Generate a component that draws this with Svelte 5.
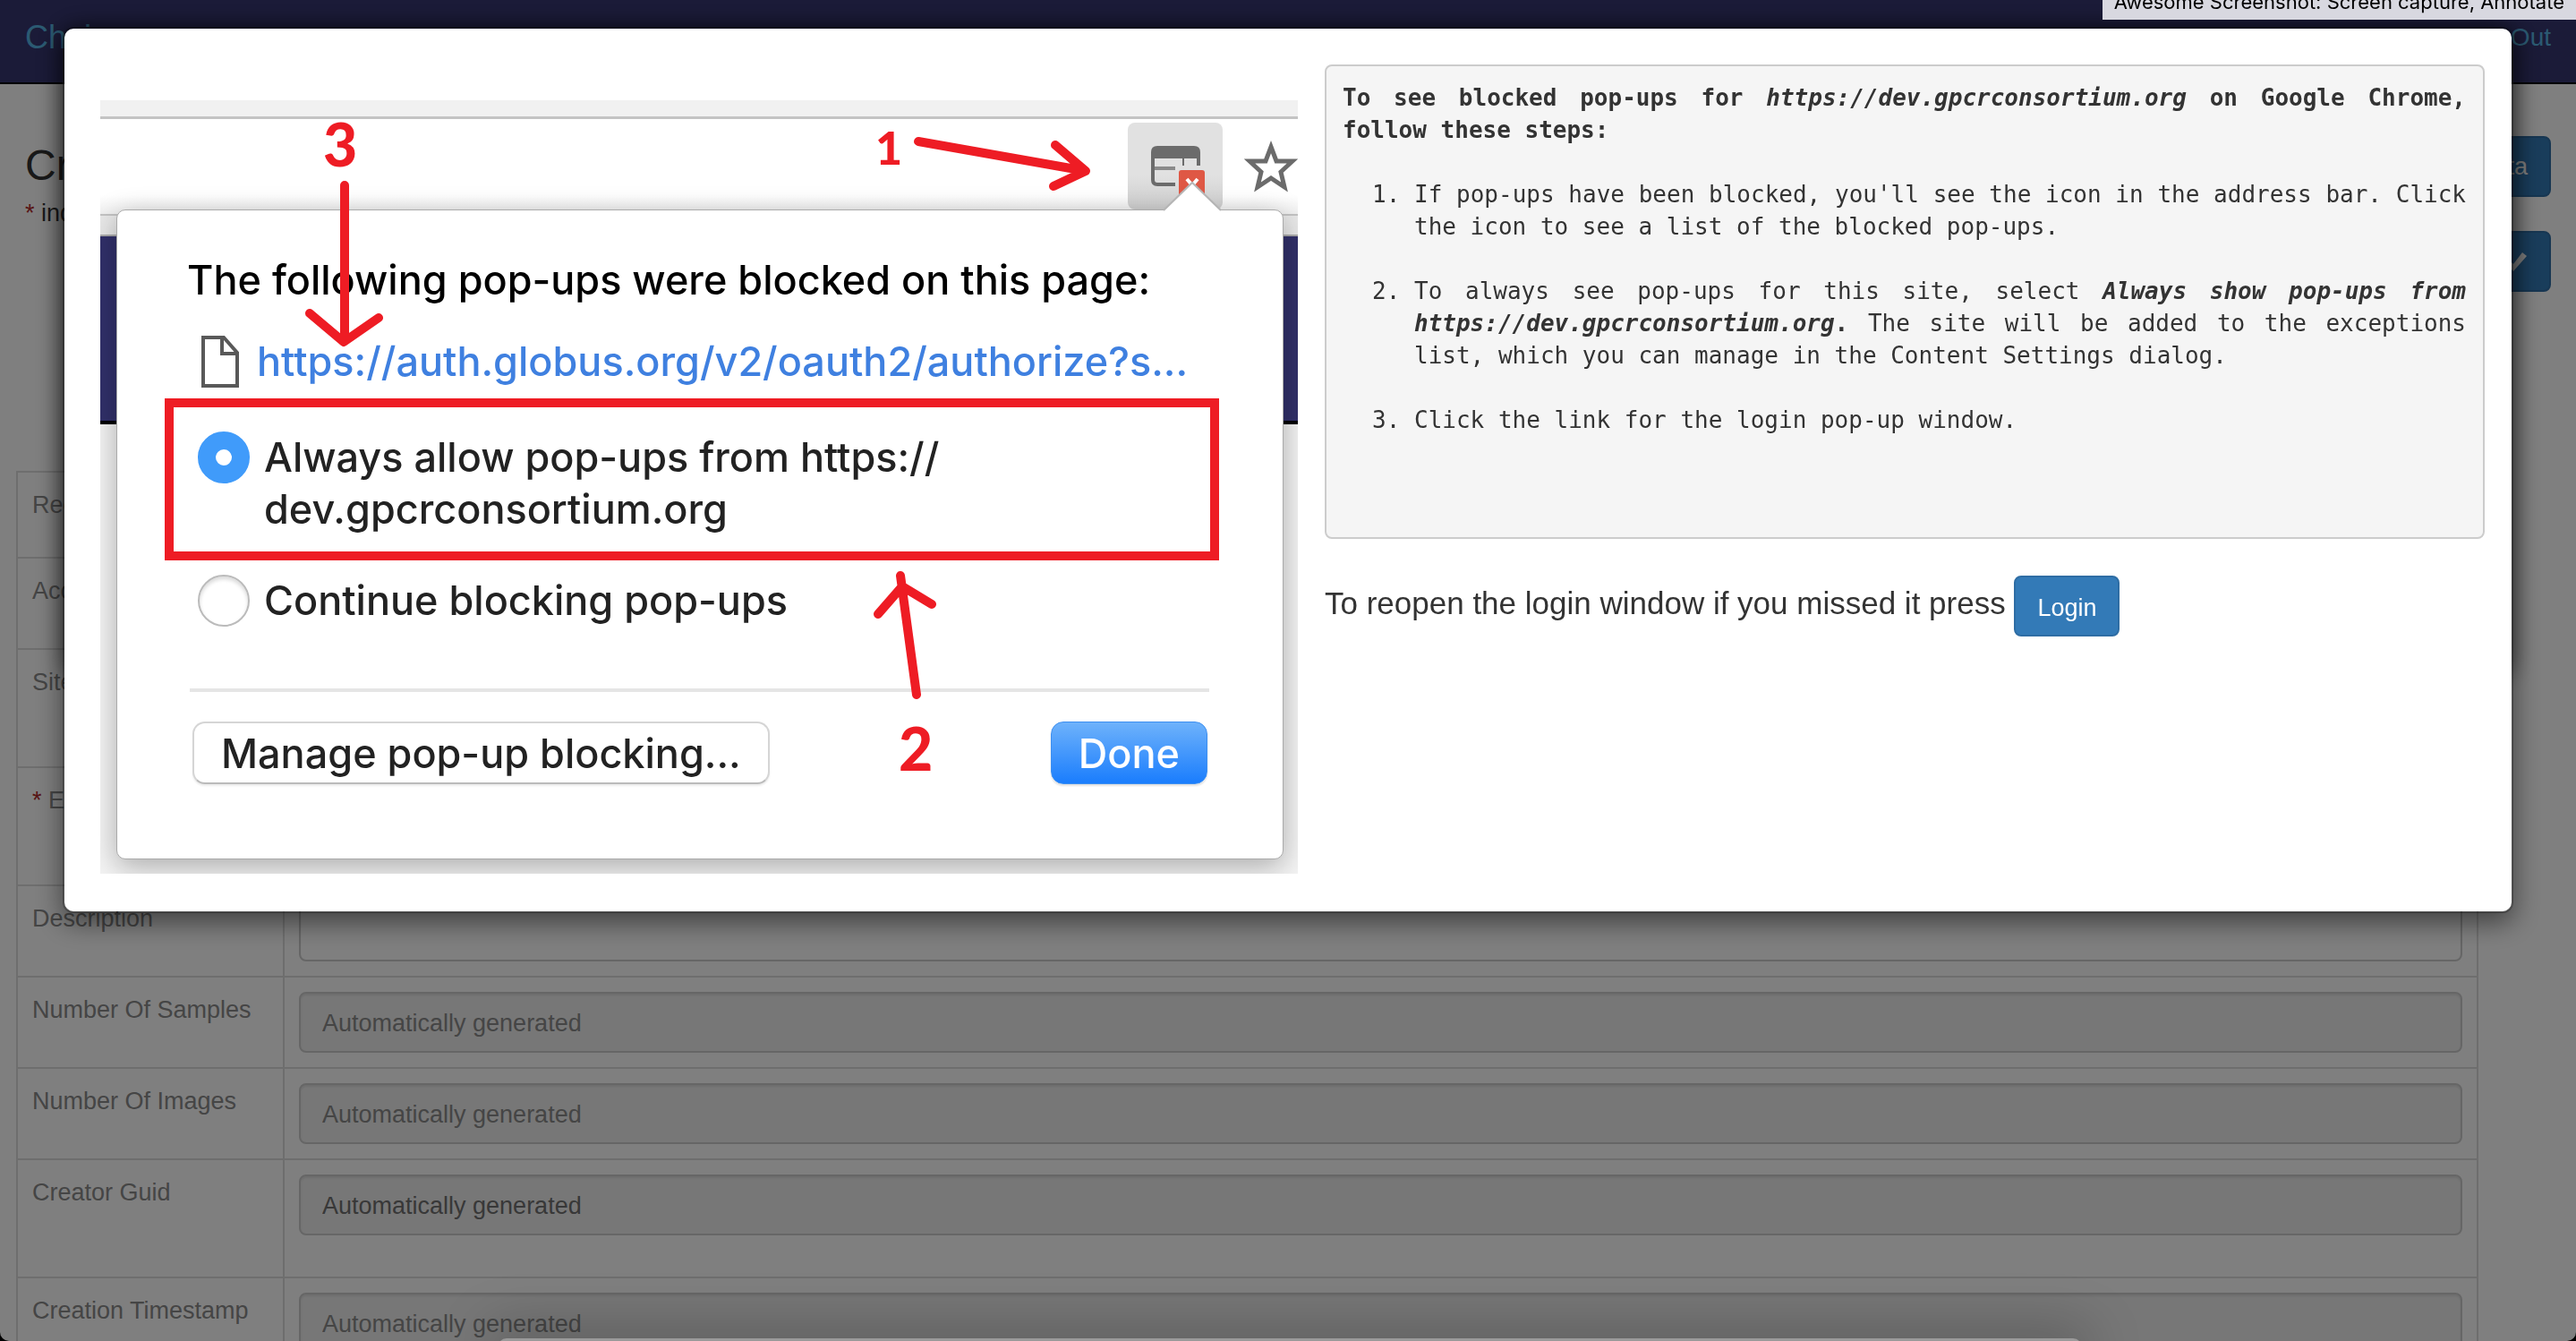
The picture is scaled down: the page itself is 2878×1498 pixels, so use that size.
<script>
  const rows = [
    { label: 'Record', size: 'short' },
    { label: 'Accession', size: 'plain' },
    { label: 'Site', size: 'tall' },
    { label: 'Experiment', size: 'tall', required: true },
    { label: 'Description', size: 'plain', editable: true },
    { label: 'Number Of Samples', size: 'plain', auto: true },
    { label: 'Number Of Images', size: 'plain', auto: true },
    { label: 'Creator Guid', size: 'tall', auto: true, strong: true },
    { label: 'Creation Timestamp', size: 'tall', auto: true }
  ];
  let choice = $state('allow');
</script>

<div class="page">
  <nav class="navbar">
    <a class="brand" href="#home">Chaise</a>
    <a class="logout" href="#logout">Log Out</a>
  </nav>

  <header class="record-head">
    <div>
      <h1>Create Record</h1>
      <p class="hint"><span class="req">*</span> indicates required field</p>
    </div>
    <div class="actions">
      <button class="primary" type="button">Submit Data</button>
      <button class="primary" type="button" aria-label="Apply">
        <svg class="check" viewBox="0 0 28 28"><path d="M1 14 L5 10 L12 17 L22 4 L27 8 L12 25 Z" /></svg>
      </button>
    </div>
  </header>

  <table class="form">
    <tbody>
      {#each rows as row, i}
        <tr class={row.size}>
          <th scope="row"><label for="field-{i}">{#if row.required}<span class="req">*</span>{' '}{/if}{row.label}</label></th>
          <td>
            <input
              id="field-{i}"
              class:strong={row.strong}
              type="text"
              disabled={row.auto}
              placeholder={row.auto ? 'Automatically generated' : ''}
            />
          </td>
        </tr>
      {/each}
    </tbody>
  </table>
</div>

<div class="overlay">
  <div class="modal" role="dialog" aria-label="Blocked pop-ups">
    <div class="columns">
      <figure class="shot">
        <div class="browser">
          <div class="tabs"></div>
          <div class="address">
            <div class="blocked">
              <svg viewBox="0 0 106 97">
                <g fill="none" stroke="#6b6b6b" stroke-width="4">
                  <path d="M53 69 H33 Q28 69 28 64 V33 Q28 28 33 28 H74 Q79 28 79 33 V48" />
                  <path d="M30 51 H53" stroke="#8a8a8a" />
                  <path d="M62 36 V48" stroke-width="2" />
                </g>
                <path d="M28 28 H79 V40 H28 Z" fill="#6b6b6b" />
                <rect x="57" y="53" width="29" height="38" rx="3" fill="#df5845" />
                <path d="M66 63 L78 77 M78 63 L66 77" stroke="#fff" stroke-width="4" />
              </svg>
            </div>
            <svg class="star" viewBox="0 0 60 60">
              <path d="M30 9 L36 25 L54 25 L41 37 L45 54 L30 44 L15 54 L19 37 L6 25 L24 25 Z" />
            </svg>
          </div>
          <div class="toolbar"></div>
          <div class="site-nav"></div>
          <div class="site-body"></div>
        </div>

        <div class="popup">
          <svg class="pointer" viewBox="0 0 64 34"><path d="M0 33 L32 2 L64 33" /></svg>
          <p class="title">The following pop-ups were blocked on this page:</p>
          <p class="target">
            <svg viewBox="0 0 42 58"><path d="M2 2 H25 L40 19 V56 H2 Z M23 2 V20 H40" /></svg>
            <a href="#authorize">https://auth.globus.org/v2/oauth2/authorize?s...</a>
          </p>
          <label class="option marked">
            <input type="radio" name="popups" value="allow" bind:group={choice} />
            <span>Always allow pop-ups from https://<br />dev.gpcrconsortium.org</span>
          </label>
          <label class="option">
            <input type="radio" name="popups" value="block" bind:group={choice} />
            <span>Continue blocking pop-ups</span>
          </label>
          <hr />
          <div class="popup-buttons">
            <button class="manage" type="button">Manage pop-up blocking...</button>
            <button class="done" type="button">Done</button>
          </div>
        </div>

        <svg class="marks" viewBox="0 0 1338 864">
          <g class="strokes">
            <path d="M914 46 L1101 79 M1067 50 L1101 79 L1065 96" />
            <path d="M273 95 V266 M234 238 L272 270 L311 243" />
            <path d="M912 664 L894 531 M869 574 L896 543 L929 563" />
          </g>
          <text x="866" y="72" font-size="52">1</text>
          <text x="249" y="74" font-size="66">3</text>
          <text x="892" y="749" font-size="66">2</text>
        </svg>
      </figure>

      <section class="help">
        <div class="steps">
          <p><b>To see blocked pop-ups for <i>https://dev.gpcrconsortium.org</i> on Google Chrome, follow these steps:</b></p>
          <ol>
            <li>If pop-ups have been blocked, you'll see the icon in the address bar. Click the icon to see a list of the blocked pop-ups.</li>
            <li>To always see pop-ups for this site, select <b><i>Always show pop-ups from https://dev.gpcrconsortium.org</i></b><b>.</b> The site will be added to the exceptions list, which you can manage in the Content Settings dialog.</li>
            <li>Click the link for the login pop-up window.</li>
          </ol>
        </div>
        <p class="reopen">To reopen the login window if you missed it press <button class="primary" type="button">Login</button></p>
      </section>
    </div>
  </div>
</div>

<div class="tooltip">Awesome Screenshot: Screen capture, Annotate</div>
<div class="dock"></div>

<style>
  :global(body) {
    background: #000;
    overflow: hidden;
    height: 100vh;
  }
  :global(#app) {
    height: 100vh;
  }
  .page {
    height: 100vh;
    overflow: hidden;
    background: #fff;
    border-radius: 0 0 10px 10px;
    font-family: 'Liberation Sans', Arial, sans-serif;
    font-size: 27px;
    color: #333;
  }
  h1, p, figure, ol {
    margin: 0;
  }
  button, input {
    font: inherit;
    box-sizing: border-box;
  }
  .navbar {
    display: flex;
    justify-content: space-between;
    align-items: center;
    height: 92px;
    padding: 0 28px;
    background: #363670;
    border-bottom: 2px solid #000;
    box-sizing: content-box;
  }
  .navbar a {
    color: #57b5e4;
    text-decoration: none;
    line-height: 84px;
    height: 92px;
  }
  .brand {
    font-size: 36px;
  }
  .logout {
    font-size: 28px;
  }
  .record-head {
    display: flex;
    justify-content: space-between;
    padding: 58px 28px 0;
  }
  h1 {
    font-size: 48px;
    font-weight: 400;
    line-height: 66px;
  }
  .hint {
    line-height: 40px;
  }
  .req {
    color: #b02a2a;
  }
  .actions {
    display: flex;
    flex-direction: column;
    align-items: flex-end;
    gap: 38px;
  }
  .primary {
    height: 68px;
    padding: 0 24px;
    border: 2px solid #2e6da4;
    border-radius: 8px;
    background: #337ab7;
    color: #fff;
    font-size: 27px;
  }
  .check {
    display: block;
    width: 28px;
    height: 28px;
    fill: #fff;
  }
  .form {
    width: calc(100% - 127px);
    margin: 200px 0 0 18px;
    border-collapse: collapse;
    border: 2px solid #ddd;
  }
  th, td {
    padding: 16px;
    border: 2px solid #ddd;
    vertical-align: top;
    text-align: left;
    box-sizing: border-box;
  }
  th {
    width: 298px;
    font-weight: 400;
    line-height: 40px;
    color: #8a8a8a;
    white-space: nowrap;
  }
  .plain {
    height: 102px;
  }
  .tall {
    height: 132px;
  }
  .short {
    height: 96px;
  }
  .short td {
    padding: 10px 16px;
  }
  td input {
    display: block;
    width: 100%;
    height: 68px;
    padding: 3px 24px 0;
    border: 2px solid #ccc;
    border-radius: 8px;
    background: #fff;
    box-shadow: inset 0 2px 2px rgba(0, 0, 0, 0.08);
  }
  td input:disabled {
    background: #eee;
  }
  td input::placeholder {
    color: #8a8a8a;
    opacity: 1;
  }
  td input.strong::placeholder {
    color: #707070;
  }

  .overlay {
    position: fixed;
    inset: 0;
    padding: 30px 70px;
    background: rgba(0, 0, 0, 0.5);
  }
  .modal {
    position: relative;
    background: #fff;
    background-clip: padding-box;
    border: 2px solid rgba(0, 0, 0, 0.3);
    border-radius: 12px;
    box-shadow: 0 10px 30px rgba(0, 0, 0, 0.5);
  }
  .modal::before {
    content: '';
    position: absolute;
    inset: 0 0 265px;
    border-radius: 12px;
    box-shadow: 0 0 26px rgba(0, 0, 0, 0.6);
    z-index: -1;
  }
  .columns {
    display: grid;
    grid-template-columns: 1338fr 1296fr;
    gap: 30px;
    padding: 40px 30px 42px 40px;
  }

  .shot {
    display: grid;
    position: relative;
    margin-top: 40px;
    overflow: hidden;
    font-family: Inter, 'Liberation Sans', sans-serif;
    color: #222;
  }
  .browser {
    grid-area: 1 / 1;
    display: flex;
    flex-direction: column;
  }
  .tabs {
    height: 18px;
    background: #f1f1f1;
    border-bottom: 3px solid #c4c4c4;
  }
  .address {
    display: flex;
    justify-content: flex-end;
    gap: 24px;
    height: 102px;
    padding-top: 4px;
    background: linear-gradient(#fff 80%, #f0f0f0);
    box-sizing: content-box;
  }
  .blocked {
    width: 106px;
    height: 97px;
    border-radius: 8px;
    background: linear-gradient(#e1e1e1 60%, #cfcfcf);
  }
  .blocked svg {
    display: block;
  }
  .star {
    width: 60px;
    height: 60px;
    margin-top: 18px;
    fill: none;
    stroke: #6b6b6b;
    stroke-width: 5;
  }
  .toolbar {
    height: 21px;
    background: #e9e9e9;
    border-top: 2px solid #c4c4c4;
    border-bottom: 2px solid #aaa;
  }
  .site-nav {
    height: 206px;
    background: #31306a;
    border-bottom: 4px solid #000;
  }
  .site-body {
    flex: 1;
    background: #f4f4f4;
  }
  .popup {
    grid-area: 1 / 1;
    position: relative;
    margin: 122px 16px 16px 18px;
    padding: 50px 71px 83px 53px;
    background: #fff;
    border: 1px solid #aaa;
    border-radius: 10px;
    box-shadow: 0 8px 32px rgba(0, 0, 0, 0.3);
    font-size: 45px;
    font-weight: 500;
  }
  .pointer {
    position: absolute;
    right: 69px;
    top: -33px;
    width: 64px;
    height: 34px;
    fill: #fff;
    stroke: #b5b5b5;
    stroke-width: 2;
  }
  .title {
    padding-left: 25px;
    line-height: 56px;
    color: #000;
    white-space: nowrap;
  }
  .target {
    display: flex;
    align-items: center;
    gap: 20px;
    margin: 34px 0 12px;
    padding-left: 41px;
    line-height: 56px;
    white-space: nowrap;
  }
  .target svg {
    width: 42px;
    height: 58px;
    fill: none;
    stroke: #595959;
    stroke-width: 4;
  }
  .target a {
    color: #3f80e0;
    text-decoration: none;
  }
  .option {
    display: flex;
    align-items: flex-start;
    gap: 16px;
    margin-top: 16px;
    padding: 0 37px;
    line-height: 58px;
    white-space: nowrap;
  }
  .marked {
    margin: 0;
    padding: 27px 27px 18px;
    border: 10px solid #ee1c24;
  }
  .option input {
    appearance: none;
    flex: none;
    width: 58px;
    height: 58px;
    margin: 0;
    border: 2px solid #bbb;
    border-radius: 50%;
    background: #fff;
    box-shadow: inset 0 3px 4px rgba(0, 0, 0, 0.15);
  }
  .option input:checked {
    border: 20px solid #409bfa;
    box-shadow: none;
  }
  hr {
    margin: 69px 0 33px 28px;
    border: 0;
    height: 4px;
    background: #e5e5e5;
    width: calc(100% - 39px);
  }
  .popup-buttons {
    display: flex;
    justify-content: space-between;
    padding: 0 13px 0 31px;
  }
  .popup-buttons button {
    height: 70px;
    padding: 0 30px;
    border-radius: 14px;
    white-space: nowrap;
  }
  .manage {
    border: 2px solid #d5d5d5;
    border-bottom-color: #bbb;
    background: #fff;
    color: #222;
    box-shadow: 0 2px 2px rgba(0, 0, 0, 0.08);
  }
  .done {
    border: 1px solid #3d8ff0;
    background: linear-gradient(#6eb2fb, #1a7dfd);
    color: #fff;
    box-shadow: 0 2px 2px rgba(0, 0, 0, 0.12);
  }
  .marks {
    position: absolute;
    inset: 0;
    width: 100%;
    height: 100%;
    pointer-events: none;
  }
  .strokes {
    fill: none;
    stroke: #ee1c24;
    stroke-width: 10;
    stroke-linecap: round;
    stroke-linejoin: round;
  }
  .marks text {
    fill: #ee1c24;
    font-family: Lato, 'Open Sans', sans-serif;
    font-weight: 900;
  }

  .help {
    color: #333;
    font-family: 'Liberation Sans', Arial, sans-serif;
  }
  .steps {
    padding: 17px 19px 113px 18px;
    border: 2px solid #ccc;
    border-radius: 8px;
    background: #f5f5f5;
    font-family: 'DejaVu Sans Mono', monospace;
    font-size: 26px;
    line-height: 36px;
    text-align: justify;
  }
  ol {
    padding-left: 80px;
  }
  li {
    margin-top: 36px;
  }
  .reopen {
    margin-top: 38px;
    font-size: 35px;
    line-height: 68px;
  }
  .reopen .primary {
    vertical-align: middle;
  }

  .tooltip {
    position: fixed;
    top: 0;
    right: 0;
    height: 22px;
    padding: 0 13px;
    background: #d8d8e0;
    color: #000;
    font-family: Inter, sans-serif;
    font-size: 22px;
    line-height: 4px;
    white-space: nowrap;
    overflow: hidden;
  }
  .dock {
    position: fixed;
    left: 556px;
    right: 552px;
    bottom: -20px;
    height: 23px;
    border-radius: 10px;
    background: #9a9a9a;
    box-shadow: 0 0 60px 10px rgba(0, 0, 0, 0.25);
  }
</style>
